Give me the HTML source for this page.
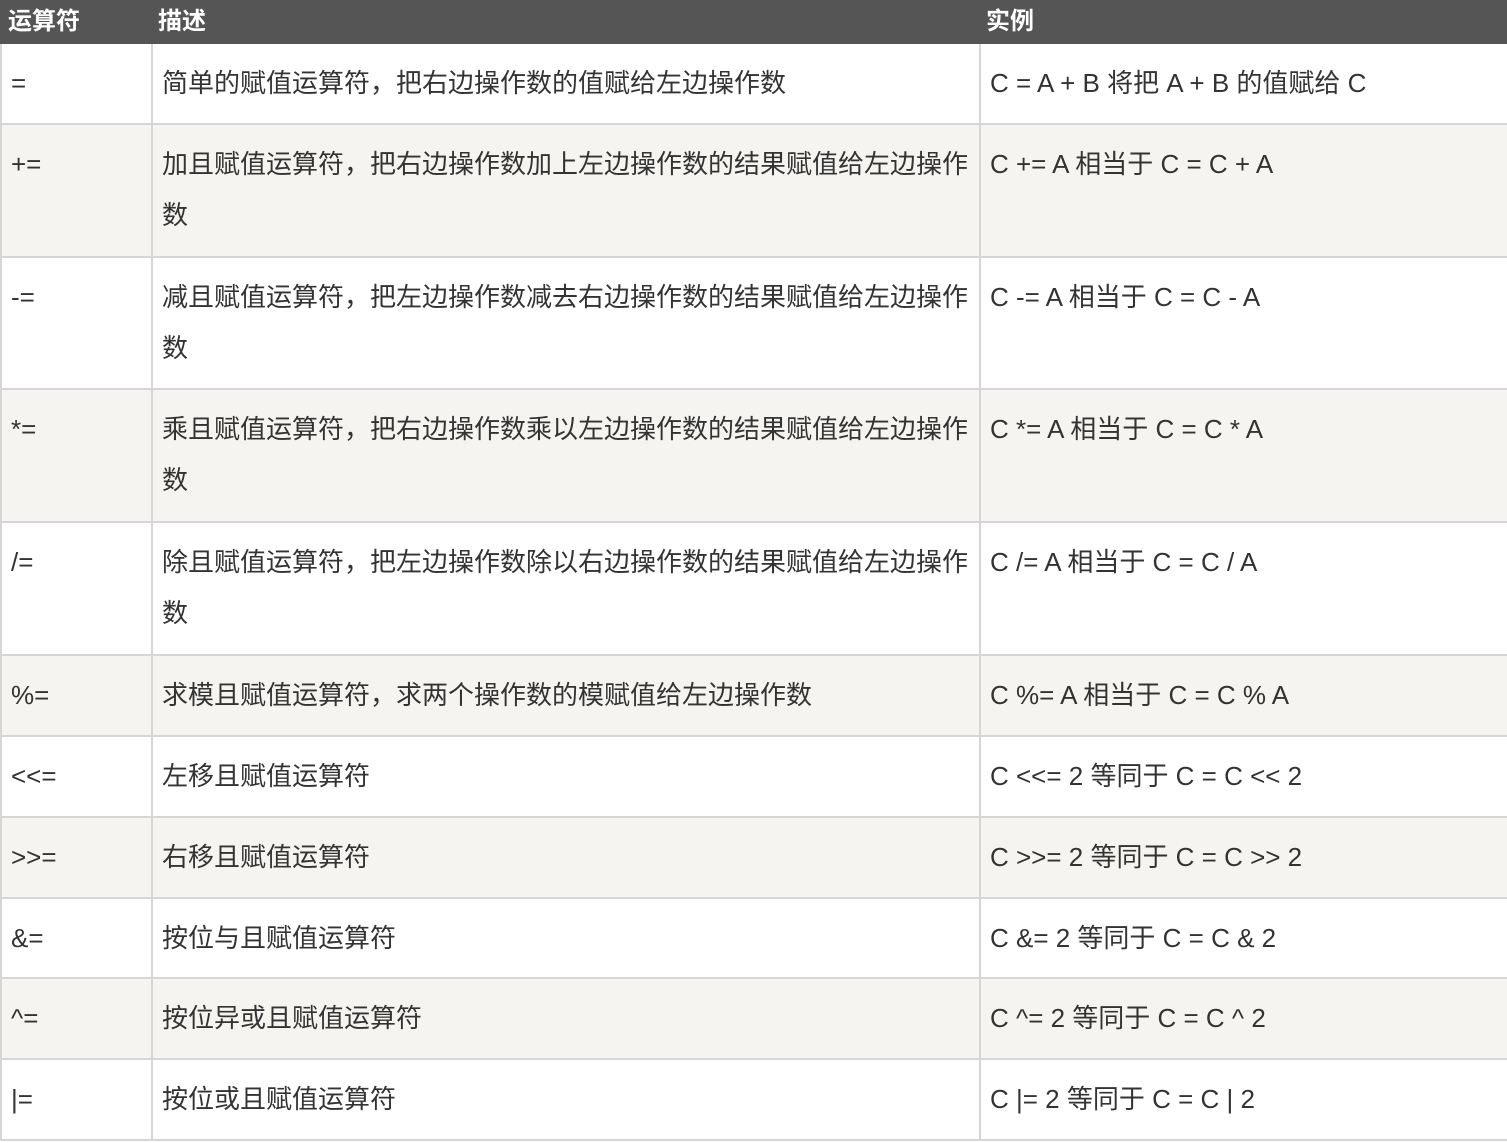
<!DOCTYPE html>
<html><head><meta charset="utf-8"><style>
body{margin:0;width:1507px;height:1143px;background:#fff;overflow:hidden;font-family:"Liberation Sans","Noto Sans CJK SC",sans-serif;}
.h{position:absolute;top:0;left:0;width:1507px;height:44px;background:#555;}
.h div{position:absolute;top:0;line-height:44px;color:#fff;font-weight:bold;font-size:24px;}
.r{position:absolute;left:0;width:1507px;border-bottom:2px solid #d6d6d6;box-sizing:border-box;}
.r.g{background:#f5f4f1;}
.c{position:absolute;top:0;bottom:0;box-sizing:border-box;padding:14px 10px 0 9px;font-size:26px;line-height:51px;color:#333;}
.c1{left:0;width:151px;border-left:2px solid #d6d6d6;}
.c2{left:151px;width:828px;border-left:2px solid #d6d6d6;}
.c3{left:979px;width:528px;border-left:2px solid #d6d6d6;}
</style></head><body>
<div class="h"><div style="left:8px">运算符</div><div style="left:158px">描述</div><div style="left:986px">实例</div></div>

<div class="r" style="top:44px;height:81px"><div class="c c1">=</div><div class="c c2">简单的赋值运算符，把右边操作数的值赋给左边操作数</div><div class="c c3">C = A + B 将把 A + B 的值赋给 C</div></div>
<div class="r g" style="top:125px;height:133px"><div class="c c1">+=</div><div class="c c2">加且赋值运算符，把右边操作数加上左边操作数的结果赋值给左边操作数</div><div class="c c3">C += A 相当于 C = C + A</div></div>
<div class="r" style="top:258px;height:132px"><div class="c c1">-=</div><div class="c c2">减且赋值运算符，把左边操作数减去右边操作数的结果赋值给左边操作数</div><div class="c c3">C -= A 相当于 C = C - A</div></div>
<div class="r g" style="top:390px;height:133px"><div class="c c1">*=</div><div class="c c2">乘且赋值运算符，把右边操作数乘以左边操作数的结果赋值给左边操作数</div><div class="c c3">C *= A 相当于 C = C * A</div></div>
<div class="r" style="top:523px;height:133px"><div class="c c1">/=</div><div class="c c2">除且赋值运算符，把左边操作数除以右边操作数的结果赋值给左边操作数</div><div class="c c3">C /= A 相当于 C = C / A</div></div>
<div class="r g" style="top:656px;height:81px"><div class="c c1">%=</div><div class="c c2">求模且赋值运算符，求两个操作数的模赋值给左边操作数</div><div class="c c3">C %= A 相当于 C = C % A</div></div>
<div class="r" style="top:737px;height:81px"><div class="c c1">&lt;&lt;=</div><div class="c c2">左移且赋值运算符</div><div class="c c3">C &lt;&lt;= 2 等同于 C = C &lt;&lt; 2</div></div>
<div class="r g" style="top:818px;height:81px"><div class="c c1">&gt;&gt;=</div><div class="c c2">右移且赋值运算符</div><div class="c c3">C &gt;&gt;= 2 等同于 C = C &gt;&gt; 2</div></div>
<div class="r" style="top:899px;height:80px"><div class="c c1">&amp;=</div><div class="c c2">按位与且赋值运算符</div><div class="c c3">C &amp;= 2 等同于 C = C &amp; 2</div></div>
<div class="r g" style="top:979px;height:81px"><div class="c c1">^=</div><div class="c c2">按位异或且赋值运算符</div><div class="c c3">C ^= 2 等同于 C = C ^ 2</div></div>
<div class="r" style="top:1060px;height:81px"><div class="c c1">|=</div><div class="c c2">按位或且赋值运算符</div><div class="c c3">C |= 2 等同于 C = C | 2</div></div>
</body></html>
